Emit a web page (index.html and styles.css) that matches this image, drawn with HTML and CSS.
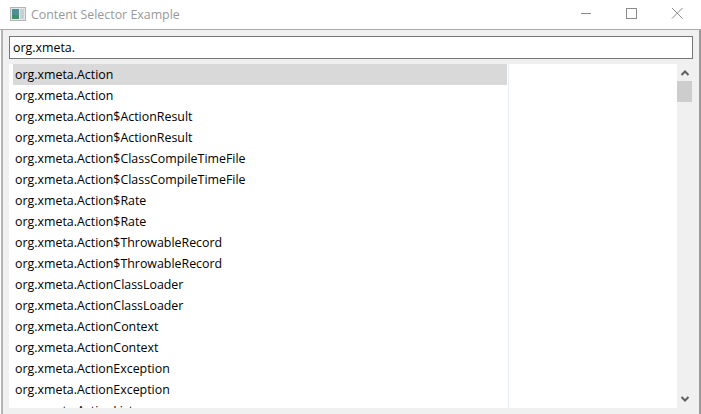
FILE: index.html
```html
<!DOCTYPE html>
<html lang="en">
<head>
  <meta charset="UTF-8"/>
  <title>Content Selector Example</title>
  <link rel="stylesheet" href="styles.css">
</head>
<body>
  <div class="window">
    <div class="titlebar">
      <svg class="app-icon" width="16" height="14" viewBox="0 0 16 14">
        <rect x="0.5" y="0.5" width="15" height="13" fill="#e4e8e8" stroke="#b5b5b5"/>
        <rect x="2" y="2" width="7" height="10" fill="#4f8f98"/>
        <rect x="2" y="8" width="7" height="4" fill="#3f8f6c"/>
        <rect x="10" y="2" width="4" height="10" fill="#c8d0d2"/>
      </svg>
      <span class="title">Content Selector Example</span>
      <div class="controls">
        <svg width="46" height="29" viewBox="0 0 46 29"><path d="M18 13.5h10" stroke="#8a8a8a" fill="none"/></svg>
        <svg width="46" height="29" viewBox="0 0 46 29"><rect x="17.5" y="8.5" width="10" height="10" stroke="#8a8a8a" fill="none"/></svg>
        <svg width="46" height="29" viewBox="0 0 46 29"><path d="M17 8l10.500 10.500M27.500 8l-10.500 10.500" stroke="#8a8a8a" fill="none"/></svg>
      </div>
    </div>
    <div class="content">
      <input class="search" type="text" value="org.xmeta.">
      <div class="lists">
        <ul class="list">
          <li class="selected">org.xmeta.Action</li>
          <li>org.xmeta.Action</li>
          <li>org.xmeta.Action$ActionResult</li>
          <li>org.xmeta.Action$ActionResult</li>
          <li>org.xmeta.Action$ClassCompileTimeFile</li>
          <li>org.xmeta.Action$ClassCompileTimeFile</li>
          <li>org.xmeta.Action$Rate</li>
          <li>org.xmeta.Action$Rate</li>
          <li>org.xmeta.Action$ThrowableRecord</li>
          <li>org.xmeta.Action$ThrowableRecord</li>
          <li>org.xmeta.ActionClassLoader</li>
          <li>org.xmeta.ActionClassLoader</li>
          <li>org.xmeta.ActionContext</li>
          <li>org.xmeta.ActionContext</li>
          <li>org.xmeta.ActionException</li>
          <li>org.xmeta.ActionException</li>
          <li>org.xmeta.ActionList</li>
        </ul>
        <div class="detail"></div>
        <div class="scrollbar">
          <svg width="16" height="17" viewBox="0 0 16 17"><path d="M4.500 11l3.500-3.500 3.500 3.500" stroke="#606060" stroke-width="2" fill="none"/></svg>
          <div class="thumb"></div>
          <svg class="down" width="16" height="17" viewBox="0 0 16 17"><path d="M4.500 6l3.500 3.500 3.500-3.500" stroke="#606060" stroke-width="2" fill="none"/></svg>
        </div>
      </div>
    </div>
  </div>
</body>
</html>
```

FILE: styles.css
```css
html, body { margin:0; padding:0; height:100%; overflow:hidden; background:#fff; }
body { font-family:"Open Sans", "Liberation Sans", sans-serif; font-size:12.4px; color:#000; }

.window { height:414px; width:701px; display:flex; flex-direction:column; }

.titlebar { height:28px; padding:0 0 1px 10px; display:flex; align-items:center; border-bottom:1px solid #aaa; }
.app-icon { flex:none; }
.title { margin-left:5px; color:#999; }
.controls { margin-left:auto; display:flex; }

.content { flex:1; min-height:0; margin:0 0 0 1px; border-left:2px solid #b4b4b4; border-right:2px solid #9a9a9a; background:#f0f0f0; padding:6px; display:flex; flex-direction:column; }
.search { box-sizing:border-box; height:23px; width:100%; flex:none; border:1px solid #777; padding:0 3px; margin:0; font:12.4px "Open Sans", "Liberation Sans", sans-serif; color:#000; background:#fff; outline:none; }

.lists { flex:1; min-height:0; margin-top:5px; display:flex; background:#fff; overflow:hidden; }
.list { list-style:none; margin:0; padding:0 1px 0 4px; width:500px; box-sizing:border-box; flex:none; border-right:1px solid #e3eefb; overflow:hidden; }
.list li { height:21px; line-height:21px; padding-left:2px; white-space:nowrap; }
.list li.selected { background:#d9d9d9; }
.detail { flex:1; }

.scrollbar { width:16px; flex:none; background:#f0f0f0; display:flex; flex-direction:column; }
.thumb { height:21px; width:15px; background:#cdcdcd; }
.scrollbar .down { margin-top:auto; }
```
